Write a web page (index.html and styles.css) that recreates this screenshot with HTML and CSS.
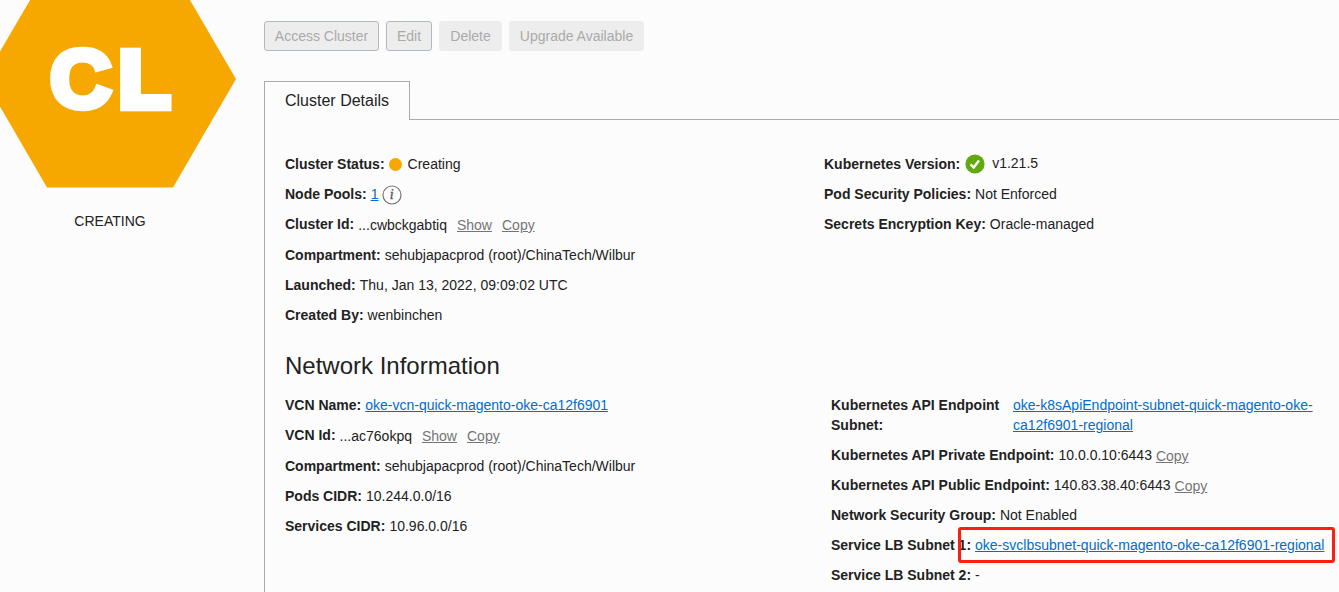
FILE: index.html
```
<!DOCTYPE html>
<html lang="en">
<head>
<meta charset="utf-8">
<title>Cluster Details</title>
<link rel="stylesheet" href="styles.css">
</head>
<body>
<div class="page">
  <aside class="side">
    <svg class="hex" width="236" height="188" viewBox="0 0 236 188">
      <path d="M47-29H173L236 79L173 187.5H47L-16 79Z" fill="#f7a800"/>
      <g class="hex-text">
        <text class="letter-c" transform="translate(49.9 106.7) scale(1.05 1)">C</text>
        <text transform="translate(119 107) scale(1.05 1)">L</text>
      </g>
    </svg>
    <div class="state">CREATING</div>
  </aside>
  <main class="main">
    <div class="actions">
      <button class="btn outlined access">Access Cluster</button>
      <button class="btn outlined edit">Edit</button>
      <button class="btn delete">Delete</button>
      <button class="btn upgrade">Upgrade Available</button>
    </div>
    <div class="tabs"><div class="tab">Cluster Details</div><div class="tab-rest"></div></div>
    <div class="panel">
      <section class="columns">
        <div class="col">
          <div class="row"><b>Cluster Status:</b><i class="dot"></i><span class="v">Creating</span></div>
          <div class="row"><b>Node Pools:</b><a class="link">1</a>
            <svg class="info" width="20" height="20" viewBox="0 0 20 20"><circle cx="10" cy="10" r="9" fill="none" stroke="#777" stroke-width="1.2"/><text x="7.8" y="14.3">i</text></svg></div>
          <div class="row tall"><b>Cluster Id:</b><span class="v low">...cwbckgabtiq</span><a class="aux low gap">Show</a><a class="aux low gap">Copy</a></div>
          <div class="row"><b>Compartment:</b><span class="v">sehubjapacprod (root)/ChinaTech/Wilbur</span></div>
          <div class="row"><b>Launched:</b><span class="v">Thu, Jan 13, 2022, 09:09:02 UTC</span></div>
          <div class="row"><b>Created By:</b><span class="v">wenbinchen</span></div>
        </div>
        <div class="col">
          <div class="row"><b>Kubernetes Version:</b>
            <svg class="check" width="20" height="20" viewBox="0 0 20 20"><circle cx="10" cy="10" r="9.6" fill="#62a90f"/><path d="M5.6 10.3L8.7 13.4L14 6.5" fill="none" stroke="#fff" stroke-width="2.4"/></svg><span class="v high">v1.21.5</span></div>
          <div class="row"><b>Pod Security Policies:</b><span class="v">Not Enforced</span></div>
          <div class="row"><b>Secrets Encryption Key:</b><span class="v">Oracle-managed</span></div>
        </div>
      </section>
      <h2 class="title">Network Information</h2>
      <section class="columns network">
        <div class="col">
          <div class="row"><b>VCN Name:</b><a class="link">oke-vcn-quick-magento-oke-ca12f6901</a></div>
          <div class="row tall"><b>VCN Id:</b><span class="v low">...ac76okpq</span><a class="aux low gap">Show</a><a class="aux low gap">Copy</a></div>
          <div class="row"><b>Compartment:</b><span class="v">sehubjapacprod (root)/ChinaTech/Wilbur</span></div>
          <div class="row"><b>Pods CIDR:</b><span class="v">10.244.0.0/16</span></div>
          <div class="row"><b>Services CIDR:</b><span class="v">10.96.0.0/16</span></div>
        </div>
        <div class="col">
          <div class="row double"><b class="wrap">Kubernetes API Endpoint<br>Subnet:</b><a class="link">oke-k8sApiEndpoint-subnet-quick-magento-oke-<br>ca12f6901-regional</a></div>
          <div class="row"><b>Kubernetes API Private Endpoint:</b><span class="v">10.0.0.10:6443</span><a class="aux low">Copy</a></div>
          <div class="row"><b>Kubernetes API Public Endpoint:</b><span class="v">140.83.38.40:6443</span><a class="aux low">Copy</a></div>
          <div class="row"><b>Network Security Group:</b><span class="v">Not Enabled</span></div>
          <div class="row marked"><b>Service LB Subnet 1:</b><a class="link">oke-svclbsubnet-quick-magento-oke-ca12f6901-regional</a><span class="marker"></span></div>
          <div class="row"><b>Service LB Subnet 2:</b><span class="v">-</span></div>
        </div>
      </section>
    </div>
  </main>
</div>
</body>
</html>
```
FILE: styles.css
```
* { box-sizing: border-box; }
body {
  margin: 0;
  background: #fcfcfc;
  color: #222;
  font: 14px/20px "Liberation Sans", Arial, sans-serif;
}
.page { display: flex; height: 592px; overflow: hidden; }
.side { width: 264px; flex: none; }
.hex { display: block; }
.hex-text text {
  font: bold 79px "Liberation Sans", Arial, sans-serif;
  fill: #fff;
  stroke: #fff;
  stroke-width: 8.4px;
}
.hex-text .letter-c { font-size: 81px; stroke-width: 6.4px; }
.state { width: 220px; margin-top: 23px; text-align: center; }
.main { flex: 1; min-width: 0; display: flex; flex-direction: column; padding-top: 21px; }
.actions { display: flex; gap: 7px; height: 30px; flex: none; }
.btn {
  font: inherit;
  height: 30px;
  padding: 0;
  border: 1px solid #ededed;
  border-radius: 3px;
  background: #ededed;
  color: #aaa;
}
.outlined { border-color: #b1b8c1; }
.access { width: 115px; }
.edit { width: 46px; }
.delete { width: 63px; }
.upgrade { width: 135px; }
.tabs { display: flex; margin-top: 30px; height: 39px; flex: none; }
.tab {
  width: 146px;
  padding-left: 20px;
  border: 1px solid #aaa;
  border-bottom: 0;
  font-size: 16px;
  line-height: 37px;
}
.tab-rest { flex: 1; border-bottom: 1px solid #aaa; }
.panel { flex: 1; padding: 34px 0 0 20px; border-left: 1px solid #aaa; }
.columns { display: grid; grid-template-columns: 539px 1fr; }
.network { grid-template-columns: 546px 1fr; }
.row { display: flex; gap: 4px; height: 30px; white-space: nowrap; position: relative; }
.tall { height: 31px; }
.double { height: 50px; }
.wrap { width: 178px; }
.low { padding-top: 1px; }
.high { margin: -1px 0 0 3px; }
.gap { margin-left: 6px; }
.link { color: #006dcc; text-decoration: underline; }
.aux { color: #757575; text-decoration: underline; }
.dot { width: 13px; height: 13px; margin: 4px 2px 0 0; border-radius: 50%; background: #f7a800; }
.info { margin-top: 1px; }
.info text { font: italic 14px "Liberation Serif", serif; fill: #555; stroke: #555; stroke-width: 0.3px; }
.check { margin-left: 1px; }
.title { margin: 18px 0 16px; font-size: 24px; font-weight: normal; line-height: 26px; }
.marker {
  position: absolute;
  left: 127px;
  top: -8px;
  width: 377px;
  height: 36px;
  border: 3px solid #fb1f12;
  border-radius: 3px;
}
```
